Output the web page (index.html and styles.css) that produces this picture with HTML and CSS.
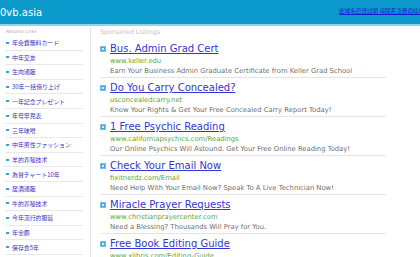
FILE: index.html
```html
<!DOCTYPE html>
<html lang="ja">
<head>
    <meta charset="UTF-8">
    <title>0vb.asia</title>
    <link rel="stylesheet" href="styles.css">
</head>
<body>
    <div class="header">
        <span class="domain">0vb.asia</span>
        <a class="notice" href="#">此域名已经过期 请联系注册商续费</a>
    </div>

    <div class="main">
        <div class="sidebar">
            <div class="side-title">Related Links</div>
            <ul class="side-links">
                <li><a href="#">年会費無料カード</a></li>
                <li><a href="#">中年交友</a></li>
                <li><a href="#">生肉通販</a></li>
                <li><a href="#">30年一括借り上げ</a></li>
                <li><a href="#">一年記念プレゼント</a></li>
                <li><a href="#">年号早見表</a></li>
                <li><a href="#">三年味噌</a></li>
                <li><a href="#">中年男性ファッション</a></li>
                <li><a href="#">羊的养殖技术</a></li>
                <li><a href="#">為替チャート10年</a></li>
                <li><a href="#">居酒通販</a></li>
                <li><a href="#">牛的养殖技术</a></li>
                <li><a href="#">今年流行的服装</a></li>
                <li><a href="#">年金額</a></li>
                <li><a href="#">保存食5年</a></li>
            </ul>
        </div>

        <div class="listings">
            <div class="list-title">Sponsored Listings</div>

            <div class="listing">
                <a class="ad-title" href="#"><span class="ad-icon"></span>Bus. Admin Grad Cert</a>
                <div class="ad-url">www.keller.edu</div>
                <div class="ad-desc">Earn Your Business Admin Graduate Certificate from Keller Grad School</div>
            </div>

            <div class="listing">
                <a class="ad-title" href="#"><span class="ad-icon"></span>Do You Carry Concealed?</a>
                <div class="ad-url">usconcealedcarry.net</div>
                <div class="ad-desc">Know Your Rights &amp; Get Your Free Concealed Carry Report Today!</div>
            </div>

            <div class="listing">
                <a class="ad-title" href="#"><span class="ad-icon"></span>1 Free Psychic Reading</a>
                <div class="ad-url">www.californiapsychics.com/Readings</div>
                <div class="ad-desc">Our Online Psychics Will Astound. Get Your Free Online Reading Today!</div>
            </div>

            <div class="listing">
                <a class="ad-title" href="#"><span class="ad-icon"></span>Check Your Email Now</a>
                <div class="ad-url">fixitnerdz.com/Email</div>
                <div class="ad-desc">Need Help With Your Email Now? Speak To A Live Technician Now!</div>
            </div>

            <div class="listing">
                <a class="ad-title" href="#"><span class="ad-icon"></span>Miracle Prayer Requests</a>
                <div class="ad-url">www.christianprayercenter.com</div>
                <div class="ad-desc">Need a Blessing? Thousands Will Pray for You.</div>
            </div>

            <div class="listing">
                <a class="ad-title" href="#"><span class="ad-icon"></span>Free Book Editing Guide</a>
                <div class="ad-url">www.xlibris.com/Editing-Guide</div>
            </div>
        </div>
    </div>
</body>
</html>
```

FILE: styles.css
```css
* {
    margin: 0;
    padding: 0;
    box-sizing: border-box;
}

body {
    font-family: 'DejaVu Sans', 'Noto Sans CJK JP', sans-serif;
    background: #ffffff;
    overflow: hidden;
}

a {
    text-decoration: none;
}

.header {
    height: 26px;
    background: #0b9acb;
    border-bottom: 2px solid #8fd4ee;
    display: flex;
    align-items: center;
    white-space: nowrap;
    overflow: hidden;
}

.domain {
    flex: 0 0 339px;
    color: #ffffff;
    font-size: 10px;
    line-height: 24px;
    padding-top: 2px;
}

.notice {
    flex-shrink: 0;
    color: #1a1ad8;
    font-size: 5.6px;
    font-family: 'Noto Sans CJK SC', sans-serif;
    text-decoration: underline;
    margin-top: -3px;
}

.main {
    display: flex;
}

.sidebar {
    width: 91px;
    border-right: 1px solid #e6e6e6;
    padding: 2px 7px 0 5px;
    min-height: 240px;
}

.side-title {
    color: #aaaaaa;
    font-size: 4.6px;
    line-height: 8px;
    padding-left: 1px;
}

.side-links {
    list-style: none;
}

.side-links li {
    height: 14.6px;
    border-bottom: 1px solid #e8e8e8;
    display: flex;
    align-items: center;
    padding-left: 1px;
}

.side-links li::before {
    content: '';
    width: 3px;
    height: 2px;
    background: #3d9fd6;
    margin-right: 3px;
}

.side-links a {
    color: #3434c0;
    font-size: 5.9px;
    font-family: 'Noto Sans CJK JP', sans-serif;
    white-space: nowrap;
}

.listings {
    padding: 2px 0 0 9px;
    width: 295px;
}

.list-title {
    color: #c4c4c4;
    font-size: 6.4px;
    line-height: 8px;
    margin-bottom: 3px;
}

.listing {
    padding: 3px 0 1px;
    border-bottom: 1px solid #e4e4e4;
    white-space: nowrap;
}

.ad-title {
    display: flex;
    align-items: center;
    color: #3535d2;
    font-size: 10px;
    line-height: 14px;
    text-decoration: underline;
}

.ad-icon {
    width: 6px;
    height: 6px;
    background: #4aa6dc;
    border: 1px solid #79c0e8;
    margin-right: 4px;
    position: relative;
}

.ad-icon::after {
    content: '';
    position: absolute;
    left: 1px;
    top: 1px;
    width: 2px;
    height: 2px;
    background: #d9eefa;
}

.ad-url {
    color: #5aa83a;
    font-size: 6.8px;
    line-height: 10px;
    padding-left: 10px;
}

.ad-desc {
    color: #707070;
    font-size: 6.8px;
    line-height: 10px;
    padding-left: 10px;
}
```
